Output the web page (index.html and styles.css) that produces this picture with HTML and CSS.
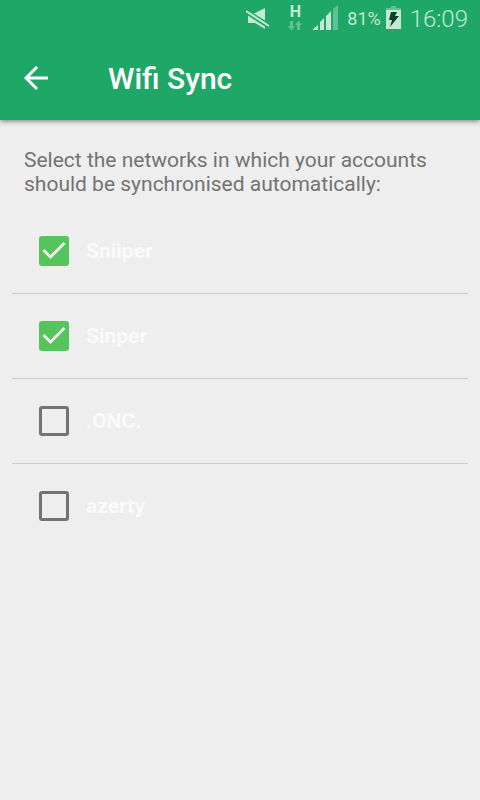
FILE: index.html
```html
<!DOCTYPE html>
<html lang="en">
<head>
<meta charset="utf-8">
<meta name="viewport" content="width=device-width, initial-scale=1">
<title>Wifi Sync</title>
<link rel="stylesheet" href="styles.css">
</head>
<body>
<header class="header">
  <div class="status">
    <svg class="mute" width="24" height="24" viewBox="0 0 24 24" aria-hidden="true">
      <path class="lit" d="M2 7h7l10-5v21L9 17H2z"/>
      <path class="gap" d="M-2 4l28 18"/>
      <path class="slash" d="M0 5l23 15"/>
    </svg>
    <span class="network">
      <span class="network-type">H</span>
      <svg width="14" height="10" viewBox="0 0 14 10" aria-hidden="true">
        <path class="dim" d="M2 0h3v5h2L3.500 9.500 0 5h2zM9 9h3V4h2L10.500 0 7 4h2z"/>
      </svg>
    </span>
    <svg class="signal" width="25" height="26" viewBox="0 0 25 26" aria-hidden="true">
      <path class="lit" d="M0 25v-1l5-4v5zM7 25v-8l4-4v12zM13 25V11l5-5v19z"/>
      <path class="dim" d="M20 25V4l5-4v25z"/>
    </svg>
    <span class="percent">81%</span>
    <svg class="battery" width="15" height="23" viewBox="0 0 15 23" aria-hidden="true">
      <path class="dim" d="M5 0h5v2h5v3H0V2h5z"/>
      <path class="lit" d="M0 4h15v19H0z"/>
      <path class="bolt" d="M5 6h6L9 10h4L4 21l2-7H3z"/>
    </svg>
    <time class="clock">16:09</time>
  </div>
  <div class="toolbar">
    <button class="back" type="button" aria-label="Back">
      <svg width="24" height="24" viewBox="0 0 24 24" aria-hidden="true">
        <path d="M24 12H2M13 1L2 12l11 11"/>
      </svg>
    </button>
    <h1 class="title">Wifi Sync</h1>
  </div>
</header>
<main>
  <p class="intro">Select the networks in which your accounts should be synchronised automatically:</p>
  <ul class="networks">
    <li><label class="row"><span class="check"><input type="checkbox" checked><svg viewBox="0 0 30 30" aria-hidden="true"><path d="M4.500 14l7 7L25.500 7"/></svg></span>Sniiper</label></li>
    <li><label class="row"><span class="check"><input type="checkbox" checked><svg viewBox="0 0 30 30" aria-hidden="true"><path d="M4.500 14l7 7L25.500 7"/></svg></span>Sinper</label></li>
    <li><label class="row"><span class="check"><input type="checkbox"><svg viewBox="0 0 30 30" aria-hidden="true"><path d="M4.500 14l7 7L25.500 7"/></svg></span>.ONC.</label></li>
    <li><label class="row"><span class="check"><input type="checkbox"><svg viewBox="0 0 30 30" aria-hidden="true"><path d="M4.500 14l7 7L25.500 7"/></svg></span>azerty</label></li>
  </ul>
</main>
</body>
</html>
```
FILE: styles.css
```css
* {
  box-sizing: border-box;
}

body {
  margin: 0;
  min-height: 100vh;
  background: #eeeeee;
  color: #737373;
  font-family: Roboto, "Liberation Sans", sans-serif;
}

.header {
  background: #1fa768;
  box-shadow: 0 1px 5px rgba(0, 0, 0, 0.5);
  color: #ffffff;
}

.status {
  display: flex;
  justify-content: flex-end;
  align-items: center;
  height: 36px;
  padding-right: 12px;
  color: #c3e8d6;
}

.lit {
  fill: #c3e8d6;
}

.dim {
  fill: #62c194;
}

.bolt {
  fill: #0c4029;
}

.gap,
.slash {
  fill: none;
  stroke: #1fa768;
  stroke-width: 5;
}

.slash {
  stroke: #c3e8d6;
  stroke-width: 2;
}

.network {
  display: flex;
  flex-direction: column;
  align-items: center;
  gap: 3px;
  margin: 0 11px 0 18px;
}

.network-type {
  font-size: 16px;
  font-weight: 700;
  line-height: 12px;
}

.percent {
  margin: 0 5px 0 9px;
  font-size: 18px;
}

.battery {
  margin-bottom: 2px;
}

.clock {
  margin-left: 9px;
  padding-top: 2px;
  font-size: 24px;
  font-weight: 300;
}

.toolbar {
  display: flex;
  align-items: center;
  height: 84px;
  padding: 0 24px;
}

.back {
  display: flex;
  margin: 0 60px 0 0;
  padding: 0;
  border: 0;
  background: none;
}

.back path {
  fill: none;
  stroke: #ffffff;
  stroke-width: 3;
}

.title {
  margin: 0;
  font-size: 30px;
  font-weight: 500;
}

.intro {
  margin: 0;
  padding: 28px 24px 13px;
  font-size: 21px;
  line-height: 24px;
}

.networks {
  margin: 0 12px;
  padding: 0;
  list-style: none;
}

.networks li + li {
  border-top: 1px solid #cecece;
}

.row {
  display: flex;
  align-items: center;
  gap: 17px;
  height: 84px;
  padding-left: 27px;
  color: #fafafa;
  font-size: 21px;
  font-weight: 700;
}

.check {
  display: grid;
  width: 30px;
  height: 30px;
}

.check > * {
  grid-area: 1 / 1;
  width: 30px;
  height: 30px;
}

.check input {
  appearance: none;
  margin: 0;
  border: 3px solid #737373;
  border-radius: 3px;
}

.check input:checked {
  border-color: #55c45a;
  background: #55c45a;
}

.check svg {
  visibility: hidden;
  pointer-events: none;
}

.check input:checked + svg {
  visibility: visible;
}

.check path {
  fill: none;
  stroke: #eeeeee;
  stroke-width: 3;
}
```
